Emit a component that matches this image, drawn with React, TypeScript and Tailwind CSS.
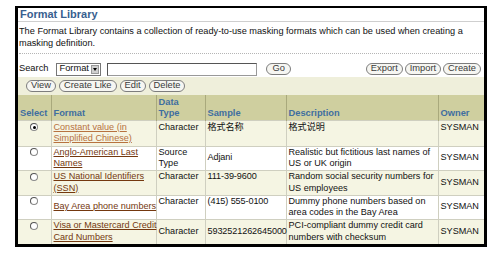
import React from "react";

const FONT = "font-['Liberation_Sans','Noto_Sans_CJK_SC',Arial,sans-serif]";

function Btn({ children }: { children: React.ReactNode }) {
  return (
    <span className="inline-flex h-[12px] items-center rounded-[6px] border border-[#7d7d7d] bg-[#f6f6f2] px-[4px] text-[9.3px] leading-none text-[#3a3a3a]">
      {children}
    </span>
  );
}

function Radio({ checked }: { checked?: boolean }) {
  return (
    <span className="inline-flex h-[8px] w-[8px] items-center justify-center rounded-full border border-[#8a8a8a] border-t-[#555] border-l-[#555] bg-white align-middle">
      {checked && <span className="h-[3px] w-[3px] rounded-full bg-black" />}
    </span>
  );
}

type Row = {
  fmt: string[];
  type: string[];
  sample: string;
  desc: string[];
  h: number;
  beige: boolean;
  checked?: boolean;
  linkColor: string;
  firstLine: boolean;
  ownerFirst: boolean;
};

const rows: Row[] = [
  {
    fmt: ["Constant value (in", "Simplified Chinese)"],
    type: ["Character"],
    sample: "格式名称",
    desc: ["格式说明"],
    h: 26,
    beige: true,
    checked: true,
    linkColor: "text-[#b7723f] decoration-[#b7723f]",
    firstLine: true,
    ownerFirst: true,
  },
  {
    fmt: ["Anglo-American Last", "Names"],
    type: ["Source", "Type"],
    sample: "Adjani",
    desc: ["Realistic but fictitious last names of", "US or UK origin"],
    h: 24,
    beige: false,
    linkColor: "text-[#74380f] decoration-[#74380f]",
    firstLine: false,
    ownerFirst: false,
  },
  {
    fmt: ["US National Identifiers", "(SSN)"],
    type: ["Character"],
    sample: "111-39-9600",
    desc: ["Random social security numbers for", "US employees"],
    h: 25,
    beige: true,
    linkColor: "text-[#74380f] decoration-[#74380f]",
    firstLine: true,
    ownerFirst: false,
  },
  {
    fmt: ["Bay Area phone numbers"],
    type: ["Character"],
    sample: "(415) 555-0100",
    desc: ["Dummy phone numbers based on", "area codes in the Bay Area"],
    h: 23,
    beige: false,
    linkColor: "text-[#74380f] decoration-[#74380f]",
    firstLine: true,
    ownerFirst: false,
  },
  {
    fmt: ["Visa or Mastercard Credit", "Card Numbers"],
    type: ["Character"],
    sample: "5932521262645000",
    desc: ["PCI-compliant dummy credit card", "numbers with checksum"],
    h: 25,
    beige: true,
    linkColor: "text-[#74380f] decoration-[#74380f]",
    firstLine: false,
    ownerFirst: false,
  },
];

function Lines({ lines, first, className = "" }: { lines: string[]; first?: boolean; className?: string }) {
  const list = first && lines.length === 1 ? [...lines, ""] : lines;
  return (
    <>
      {list.map((t, j) => (
        <div key={j} className={`h-[11.5px] whitespace-nowrap ${t ? className : ""}`}>
          {t || "\u00a0"}
        </div>
      ))}
    </>
  );
}

export default function App() {
  return (
    <div className={`h-[257px] w-[495px] bg-white pl-[15px] pt-[6px] ${FONT}`}>
      <div className="flex h-[241px] w-[472px] flex-col overflow-hidden border-x-[3px] border-b-[3px] border-t-2 border-black bg-white">
        {/* Title */}
        <div className="h-[14px] shrink-0 border-b border-[#cfcfcf] pl-[2px] text-[11px] font-bold leading-[13px] text-[#38608f]">
          Format Library
        </div>
        {/* Description */}
        <div className="shrink-0 pl-[1px] pt-[4px] text-[9.2px] leading-[11.5px] text-[#111]">
          The Format Library contains a collection of ready-to-use masking formats which can be used when creating a
          <br />
          masking definition.
        </div>
        <div className="mx-[1px] mt-[4px] shrink-0 border-t border-dotted border-[#b5b5b5]" />
        {/* Search row */}
        <div className="mt-[8px] flex h-[14px] shrink-0 items-center pl-[1px] pr-[3px] text-[9.3px] text-[#111]">
          <span>Search</span>
          <span className="ml-[8px] flex h-[13px] w-[45px] items-center justify-between border border-[#777] bg-white pl-[2px] pr-[1px]">
            <span className="leading-none">Format</span>
            <span className="flex h-[9px] w-[8px] items-center justify-center border border-[#999] bg-[#cfcfcf]">
              <span className="h-0 w-0 border-x-[2.5px] border-t-[3px] border-x-transparent border-t-black" />
            </span>
          </span>
          <span className="ml-[6px] h-[13px] w-[150px] border border-[#999] border-l-[#555] border-t-[#555] bg-white" />
          <span className="ml-[9px]">
            <Btn>
              <span className="px-[1px]">Go</span>
            </Btn>
          </span>
          <span className="ml-auto flex gap-[2px]">
            <Btn>Export</Btn>
            <Btn>Import</Btn>
            <Btn>Create</Btn>
          </span>
        </div>
        {/* Button bar */}
        <div className="mt-[1px] flex h-[18px] shrink-0 items-center gap-[3px] bg-[#efefdb] pl-[8px]">
          <Btn>View</Btn>
          <Btn>Create Like</Btn>
          <Btn>Edit</Btn>
          <Btn>Delete</Btn>
        </div>
        {/* Table */}
        <table className="w-[466px] shrink-0 table-fixed border-collapse text-[9.1px] leading-[11.5px] text-[#111]">
          <colgroup>
            <col className="w-[33px]" />
            <col className="w-[105px]" />
            <col className="w-[49px]" />
            <col className="w-[81px]" />
            <col className="w-[152px]" />
            <col className="w-[46px]" />
          </colgroup>
          <thead>
            <tr className="h-[25px] bg-[#cfcf9f] text-left align-bottom text-[9.3px] font-bold text-[#3f6e9f]">
              <th className="border-r border-[#a9a97c] px-[2px] pb-0 text-left font-bold">Select</th>
              <th className="border-r border-[#a9a97c] px-[2px] pb-0 text-left font-bold">Format</th>
              <th className="border-r border-[#a9a97c] px-[2px] pb-0 text-left font-bold">
                Data
                <br />
                Type
              </th>
              <th className="border-r border-[#a9a97c] px-[2px] pb-0 text-left font-bold">Sample</th>
              <th className="border-r border-[#a9a97c] px-[2px] pb-0 text-left font-bold">Description</th>
              <th className="px-[2px] pb-0 text-left font-bold">Owner</th>
            </tr>
          </thead>
          <tbody>
            {rows.map((r, i) => (
              <tr
                key={i}
                style={{ height: r.h }}
                className={`${r.beige ? "bg-[#f5f5e3]" : "bg-white"} border-t border-[#cfcfc0] align-middle`}
              >
                <td className="border-r border-[#cfcfc0] p-0 text-center">
                  <div className="flex h-[11.5px] items-center justify-center">
                    <Radio checked={r.checked} />
                  </div>
                  <div className="h-[11.5px]" />
                </td>
                <td className="border-r border-[#cfcfc0] px-[2px]">
                  <Lines lines={r.fmt} className={`underline ${r.linkColor}`} />
                </td>
                <td className="border-r border-[#cfcfc0] px-[2px]">
                  <Lines lines={r.type} first={r.firstLine} />
                </td>
                <td className="border-r border-[#cfcfc0] pl-[2px] tracking-[-0.1px]">
                  <Lines lines={[r.sample]} first={r.firstLine} />
                </td>
                <td className="border-r border-[#cfcfc0] px-[2px]">
                  <Lines lines={r.desc} first={r.firstLine} />
                </td>
                <td className="px-[2px]">
                  <Lines lines={["SYSMAN"]} first={r.ownerFirst} />
                </td>
              </tr>
            ))}
          </tbody>
        </table>
      </div>
    </div>
  );
}
